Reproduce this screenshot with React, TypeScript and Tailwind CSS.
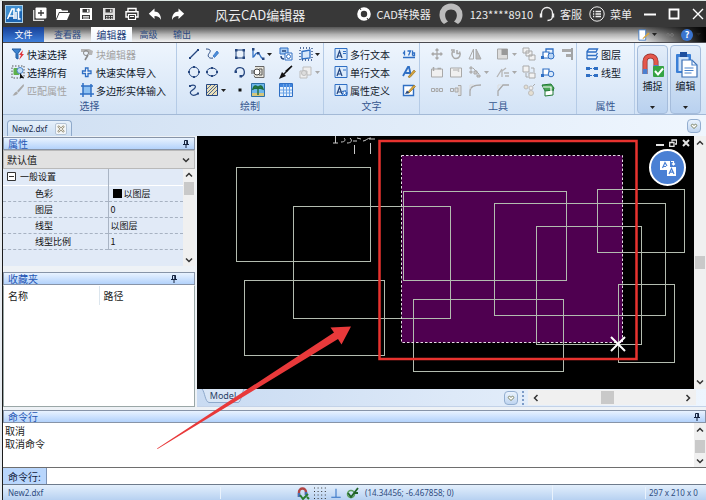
import type { ReactNode } from "react";

const NAVY = "#25467f";
const BLUE = "#2f6fc4";
const GRAY = "#a9a9a9";

function Ico({ children, className = "size-3.5" }: { children: ReactNode; className?: string }) {
  return (
    <svg viewBox="0 0 14 14" fill="none" className={`${className} shrink-0`} aria-hidden="true">
      {children}
    </svg>
  );
}

function Caret({ color = "#222" }: { color?: string }) {
  return (
    <svg viewBox="0 0 5 3" className="h-[3px] w-[5px] shrink-0" aria-hidden="true">
      <path d="M0 0h5L2.500 3z" fill={color} />
    </svg>
  );
}

function Chevron({ dir }: { dir: "up" | "down" | "left" | "right" }) {
  const d = {
    up: "M1 5.500 4 2.500l3 3",
    down: "M1 2.500 4 5.500l3-3",
    left: "M5.500 1 2.500 4l3 3",
    right: "M2.500 1 5.500 4l-3 3",
  }[dir];
  return (
    <svg viewBox="0 0 8 8" className="size-2 shrink-0" fill="none" stroke="#333" strokeWidth="1.500" aria-hidden="true">
      <path d={d} />
    </svg>
  );
}

function Pin() {
  return (
    <svg viewBox="0 0 8 8" className="size-2 shrink-0" fill="none" stroke="#14233f" aria-hidden="true">
      <path d="M2.500 4.500v-4h3v4M1 4.500h6M4 5v3" />
      <path d="M5 .5v4" strokeWidth="1.500" />
    </svg>
  );
}

function HeartButton({ label }: { label: string }) {
  return (
    <button aria-label={label} className="flex size-[14px] shrink-0 items-center justify-center rounded-sm border border-[#93aed0] bg-linear-to-b from-[#eaf3fd] to-[#bfd5f0]">
      <svg viewBox="0 0 8 8" className="size-2" fill="#fff" stroke="#7d8468" aria-hidden="true">
        <path d="M4 6.500 1 3.600 2.300 2 4 3.300 5.700 2 7 3.600z" />
      </svg>
    </button>
  );
}

/* ---------- title bar ---------- */

function TitleIcon({ label, children }: { label: string; children: ReactNode }) {
  return (
    <button aria-label={label} className="flex h-4 w-[23px] items-center justify-center">
      <svg viewBox="0 0 14 14" className="size-3.5" fill="none" aria-hidden="true">{children}</svg>
    </button>
  );
}

function TitleBar() {
  return (
    <header className="flex h-[26px] shrink-0 items-center bg-[#383838] pr-0.5 pl-0.5 text-[11px] text-[#ececec]">
      <svg viewBox="0 0 18 18" className="size-[18px] shrink-0" aria-hidden="true">
        <rect width="18" height="18" fill="#a9cfe8" />
        <rect x="1" y="1" width="16" height="16" fill="#1c66b4" />
        <path d="M1 1h16v5L1 12z" fill="#3f8ed0" />
        <path d="M2.500 14 7 4h2v10M4.500 11H9M11 14V7M13.500 3v8M11.500 5h4M13.500 11v3h2" stroke="#fff" strokeWidth="1.600" fill="none" />
      </svg>
      <nav aria-label="快速访问" className="ml-[5px] flex items-center">
        <TitleIcon label="新建">
          <path d="M.7 3v10.300H11" stroke="#ddd" strokeWidth="1.300" />
          <rect x="2.500" y=".5" width="11" height="11" rx="1" fill="#fff" />
          <path d="M8 3v6M5 6h6" stroke="#383838" strokeWidth="1.300" />
        </TitleIcon>
        <TitleIcon label="打开">
          <path d="M0 12V2h5l1 1.500h6V5H3zM3.500 6H14l-3 7H.5z" fill="#fff" />
        </TitleIcon>
        <TitleIcon label="保存">
          <path d="M1 1h12v12H1z" fill="#fff" />
          <path d="M3.500 2h7v3.500h-7zM3 8h8v4H3z" fill="#383838" />
          <path d="M8 2.500h1.500V5H8zM4 9h6v.8H4zM4 10.600h6v.8H4z" fill="#fff" />
        </TitleIcon>
        <TitleIcon label="另存为">
          <path d="M1 1h12v12H1z" fill="#ddd" />
          <path d="M3.500 2h7v3.500h-7zM3 8h8v4H3z" fill="#383838" />
          <path d="M8 2.500h1.500V5H8zM4 9h1.500v1H4zM6.500 9H8v1H6.500zM9 9h1.500v1H9zM4 10.800h1.500v1H4zM6.500 10.800H8v1H6.500zM9 10.800h1.500v1H9z" fill="#ddd" />
        </TitleIcon>
        <TitleIcon label="打印">
          <path d="M3 4V1.500h8V4M3 10H1V4.700h12V10h-2" stroke="#fff" strokeWidth="1.400" />
          <path d="M3.500 7.500h7v5h-7zM5 9.500h4" stroke="#fff" strokeWidth="1.200" />
        </TitleIcon>
        <TitleIcon label="撤销">
          <path d="M6.500 1.500v3c4 0 6.500 3 6.500 8.500-1.500-3-3-4-6.500-4v3L.8 6.700z" fill="#fff" />
        </TitleIcon>
        <TitleIcon label="重做">
          <path d="M7.500 1.500v3C3.500 4.500 1 7.500 1 13c1.500-3 3-4 6.500-4v3l5.700-5.300z" fill="#fff" />
        </TitleIcon>
      </nav>
      <h1 className="ml-[26px] text-[13px] leading-none whitespace-nowrap">风云CAD编辑器</h1>
      <div className="ml-auto flex items-center whitespace-nowrap">
        <button className="flex items-center gap-[5px]">
          <svg viewBox="0 0 14 14" className="size-3.5" fill="none" aria-hidden="true">
            <circle cx="7" cy="7" r="5" stroke="#fff" strokeWidth="3.600" />
            <path d="m2 0 2 3M12 14l-2-3" stroke="#383838" />
          </svg>
          CAD转换器
        </button>
        <button className="ml-2 flex items-center gap-[7px]">
          <svg viewBox="0 0 24 24" className="size-6" aria-hidden="true">
            <path d="M5 22A11.500 11.500 0 1 1 19 22l-4-2.500c4-3 4.500-12-3-12s-7 9-3 12z" fill="#bcbcbc" />
          </svg>
          123****8910
        </button>
        <button className="ml-1.5 flex items-center gap-[5px]">
          <svg viewBox="0 0 16 16" className="size-4" fill="none" stroke="#eee" aria-hidden="true">
            <path d="M2.500 8V7a5.500 5.500 0 0 1 11 0v1M13.500 10c0 3-2 4.500-5 4.500" strokeWidth="1.300" />
            <path d="M2 7.500v4M14 7.500v4" strokeWidth="2.400" />
          </svg>
          客服
        </button>
        <button className="ml-[7px] flex items-center gap-[5px]">
          <svg viewBox="0 0 16 16" className="size-4" fill="none" stroke="#eee" aria-hidden="true">
            <circle cx="8" cy="8" r="7.200" />
            <path d="M4 5.500h1.200M6.500 5.500H12M4 8h1.200M6.500 8H12M4 10.500h1.200M6.500 10.500H12" strokeWidth="1.300" />
          </svg>
          菜单
        </button>
        <div className="ml-3 flex items-center gap-3">
          <button aria-label="最小化"><svg viewBox="0 0 12 12" className="size-3" stroke="#fff" strokeWidth="2"><path d="M0 6.500h12" /></svg></button>
          <button aria-label="最大化"><svg viewBox="0 0 12 12" className="size-3" stroke="#fff" strokeWidth="1.800" fill="none"><path d="M1.500 1.500h9v9h-9z" /></svg></button>
          <button aria-label="关闭"><svg viewBox="0 0 12 12" className="size-3" stroke="#fff" strokeWidth="1.400"><path d="m1 1 10 10M11 1 1 11" /></svg></button>
        </div>
      </div>
    </header>
  );
}

function RibbonTabs() {
  return (
    <div className="flex h-4 shrink-0 items-stretch border-b border-[#4a4a50] bg-linear-to-b from-[#565656] via-[#b4b4b4] to-[#f4f4f4] text-[9px] text-[#2c4a82]">
      <div role="tablist" className="flex items-stretch leading-none">
        <button role="tab" className="w-[41px] bg-linear-to-b from-[#173f96] to-[#3d7edb] text-white">文件</button>
        <button role="tab" className="w-[47px]">查看器</button>
        <button role="tab" aria-selected="true" className="w-[41px] bg-linear-to-b from-white to-[#eef5fd] text-[10px] text-[#1f3f7a]">编辑器</button>
        <button role="tab" className="w-[33px]">高级</button>
        <button role="tab" className="w-[34px]">输出</button>
      </div>
      <div className="ml-auto flex w-[110px] items-center justify-end gap-[3px] bg-linear-to-r from-transparent from-40% to-black pr-[5px]">
        <button aria-label="样式" className="flex items-center gap-0.5">
          <Ico className="size-3">
            <path d="M1 1h8v12H1z" fill="#fff" stroke="#3b76c4" />
            <path d="m5 11 7-7 1.500 1.500-7 6z" fill="#d9a63c" />
          </Ico>
          <Caret />
        </button>
        <svg viewBox="0 0 8 6" className="mr-1 ml-1.5 h-1.5 w-2" fill="none" stroke="#777" aria-hidden="true"><circle cx="2" cy="3" r="1.400" /><circle cx="6" cy="3" r="1.400" /></svg>
        <button aria-label="帮助" className="flex size-3 items-center justify-center rounded-full bg-[#3a74cf] text-[9px] leading-none font-bold text-white">?</button>
        <Caret />
      </div>
    </div>
  );
}

/* ---------- ribbon ---------- */

function Group({ title, className, children }: { title: string; className: string; children: ReactNode }) {
  return (
    <section className={`flex shrink-0 flex-col border-r border-[#b5cbe6] ${className}`}>
      <div className="h-14 pt-0.5">{children}</div>
      <h2 className="text-center text-[10px] leading-[14px] text-[#35568f]">{title}</h2>
    </section>
  );
}

function Cmd({ icon, label, off }: { icon: ReactNode; label: string; off?: boolean }) {
  return (
    <button disabled={off} className={`flex h-[18px] items-center gap-0.5 text-[10px] whitespace-nowrap ${off ? "text-[#a3a3a3]" : "text-[#10182a]"}`}>
      {icon}
      {label}
    </button>
  );
}

function Tool({ label, caret, off, children }: { label: string; caret?: boolean; off?: boolean; children: ReactNode }) {
  return (
    <button aria-label={label} disabled={off} className="flex h-[18px] items-center gap-0.5 pl-0.5">
      <Ico>{children}</Ico>
      {caret && <Caret color={off ? GRAY : "#222"} />}
    </button>
  );
}

function SelectGroup() {
  return (
    <Group title="选择" className="w-[174px]">
      <div className="flex">
        <div className="flex w-[70px] flex-col pl-2">
          <Cmd label="快速选择" icon={<Ico><path d="M1 2h9L7 6.500V12l-2-1V6.500z" fill="#3c83cf" stroke="#235b9f" /><path d="m12 3-4 5h2l-2 5 5-6h-2z" fill="#e0353b" /></Ico>} />
          <Cmd label="选择所有" icon={<Ico><path d="M1 1h12v12H1z" stroke="#555" strokeDasharray="1.500 1.500" /><rect x="2.500" y="3" width="6" height="7" rx="1" fill="#5db04a" /><circle cx="9" cy="5.500" r="3" fill="#c2dcf5" stroke="#4a86c8" /><path d="m9 8 4 5H9z" fill="#111" /></Ico>} />
          <Cmd off label="匹配属性" icon={<Ico><path d="M12.500 1 6 8l1.500 1.500L13 3zM5.500 8.500 7 10c-1 2-3 2.500-5.500 2.500C3 11.500 3.500 9 5.500 8.500z" fill={GRAY} /></Ico>} />
        </div>
        <div className="flex flex-col pl-[7px]">
          <Cmd off label="块编辑器" icon={<Ico><path d="M1 2h8l4 2-1 4H9L8 5H1z" fill="#b5b5b5" /><circle cx="6" cy="6" r="2.500" stroke="#888" /><path d="m8 8-3 5" stroke="#888" strokeWidth="1.600" /></Ico>} />
          <Cmd label="快速实体导入" icon={<Ico><path d="M5.500 3h2.500v3h3v2.500H8v3H5.500v-3h-3V6h3z" stroke={BLUE} strokeWidth="1.300" fill="#fff" /></Ico>} />
          <Cmd label="多边形实体输入" icon={<Ico><path d="M3 3h8v8H3z" fill="#8cc0f2" /><path d="M3 0v14M11 1v13M0 11h14M1 3h12" stroke={BLUE} strokeWidth="1.500" /></Ico>} />
        </div>
      </div>
    </Group>
  );
}

function DrawGroup() {
  return (
    <Group title="绘制" className="w-[147px]">
      <div className="grid grid-cols-[18px_28px_18px_28px_20px_26px] pl-2">
        <Tool label="直线"><path d="M3 11 11 3" stroke={NAVY} strokeWidth="1.200" /><path d="M2 10h2v2H2zM10 2h2v2h-2z" fill={NAVY} /></Tool>
        <Tool label="徒手画"><path d="M1 2c5 0 5 2 3 4.500s0 5.500 4 4.500" stroke={NAVY} /><path d="m8 9 4-5 1.500 2-4 4.500z" fill="#4d8fda" stroke={BLUE} strokeWidth=".8" /></Tool>
        <Tool label="矩形"><path d="M3 3h8v8H3z" stroke={NAVY} /><path d="M2 2h2.500v2.500H2zM9.500 2H12v2.500H9.500zM2 9.500h2.500V12H2zM9.500 9.500H12V12H9.500z" fill={NAVY} /></Tool>
        <Tool label="多段线" caret><path d="M2 2v8c2 0 2-5 5-4s2 6 6 6" stroke={BLUE} strokeWidth="1.300" /><path d="M1 1h2.500v2.500H1zM6 5h2.500v2.500H6zM11 10.500h2.500V13H11z" fill={NAVY} /></Tool>
        <Tool label="插入块"><path d="M1 1h8v6H1z" fill="#a9cdf3" stroke={BLUE} /><path d="M6 6h7v7H6z" fill="#fff" stroke={BLUE} /><circle cx="9.500" cy="9.500" r="2" stroke={BLUE} /><path d="M2 9c0 2 1 3 3 3M3 4h4" stroke={NAVY} strokeWidth="1.400" /></Tool>
        <Tool label="面域" caret><path d="M3 4.500 11 3v8l-8 1z" fill="#d8e8fa" stroke={BLUE} strokeWidth="1.300" /><path d="M1 1h12v12H1z" stroke={NAVY} strokeDasharray="1 2" strokeWidth="1.300" /></Tool>

        <Tool label="圆"><circle cx="7" cy="7" r="5" stroke={NAVY} /><path d="M6 1h2v2H6zM6 11h2v2H6zM1 6h2v2H1zM11 6h2v2h-2z" fill={NAVY} /></Tool>
        <Tool label="椭圆"><ellipse cx="7" cy="7" rx="5.200" ry="4" stroke={NAVY} /><path d="M6 2h2v2H6zM6 10h2v2H6zM1 6h2v2H1zM11 6h2v2h-2z" fill={NAVY} /></Tool>
        <Tool label="圆弧"><path d="M2.500 6A4.500 4.500 0 1 1 8 11.500" stroke={NAVY} strokeWidth="1.300" /><path d="M1.500 5.500H4V8H1.500zM6.500 10H9v2.500H6.500z" fill={NAVY} /></Tool>
        <Tool label="擦除"><path d="M4 1.500h9v11H4l-1-2" fill="#e7e5dc" stroke="#666" /><circle cx="6" cy="7" r="3" fill="#fff" stroke="#444" /><path d="M0 6h4M0 8h4M8 4h3v6H8" stroke="#555" /></Tool>
        <Tool label="引线"><path d="M13 1 4 10" stroke="#111" strokeWidth="1.500" /><path d="M0 14 3 7l4 4z" fill="#111" /><path d="M13 0 6 6l2 1z" fill="#111" /></Tool>
        <Tool label="三维实体" caret off><path d="M1 6h7v7H1zM4 6V2h8v8H8" fill="#eee" stroke="#bdbdbd" /><circle cx="5" cy="8" r="2.500" fill="#ddd" stroke="#bdbdbd" /></Tool>

        <Tool label="样条曲线"><path d="M3 3c4-2 7 0 4.500 2.500S2 8.500 4 11s5 1 7-.5" stroke={NAVY} strokeWidth="1.200" /><path d="M2 2h2v2H2zM10 9.500h2v2h-2z" fill={NAVY} /></Tool>
        <Tool label="填充" caret><path d="M1.500 1.500h11v11h-11z" fill="#eadfb8" stroke={NAVY} /><path d="m2 6 4-4M2 10l8-8M3 12l9-9M7 12l5-5" stroke="#4f6a95" /></Tool>
        <Tool label="点"><path d="M5.500 5.500h3v3h-3z" fill="#111" /></Tool>
        <Tool label="图像"><path d="M.5.5h13v13H.500z" fill="#6db6ea" stroke="#2b6fa8" /><path d="M1 10h12v3H1z" fill="#d5c67c" /><path d="M7 12V5M2 6c1-4 4-4 5-1 1-3 4-3 5 1-2-1-3-1-5-1-2 0-3 0-5 1z" stroke="#1d6b3b" strokeWidth="1.400" fill="#2a8a4b" /></Tool>
        <Tool label="表格"><path d="M.5.500h13v13H.500z" fill="#e6f1fd" stroke={BLUE} /><path d="M1 1h12v3H1z" fill="#3f84dd" /><path d="M1 7h12M1 10h12M4.500 1v12M7.500 1v12M10.500 1v12" stroke="#6aa3e6" /></Tool>
      </div>
    </Group>
  );
}

function TextIco({ kind }: { kind: "multi" | "single" | "attr" }) {
  return (
    <Ico>
      <path d="M1 1.500h12v11H1z" fill="#dcebfb" stroke={BLUE} />
      <path d="m3 11 2.500-7L8 11M3.500 9h4" stroke={NAVY} strokeWidth="1.200" />
      {kind === "multi" && <path d="M9 4.500h3M9 6.500h3" stroke={BLUE} />}
      {kind === "single" && <path d="M9 5h3" stroke={BLUE} />}
      {kind === "attr" && <circle cx="10.500" cy="10" r="2" stroke={BLUE} strokeWidth="2" strokeDasharray="1.500 .6" fill="#fff" />}
    </Ico>
  );
}

function TextGroup() {
  return (
    <Group title="文字" className="w-24">
      <div className="flex justify-between pr-[3px] pl-2.5">
        <div className="flex flex-col">
          <Cmd label="多行文本" icon={<TextIco kind="multi" />} />
          <Cmd label="单行文本" icon={<TextIco kind="single" />} />
          <Cmd label="属性定义" icon={<TextIco kind="attr" />} />
        </div>
        <div className="flex flex-col">
          <Tool label="查找文本"><path d="M1 10.500h12M2.500 3.500v5M2.500 5 1 6.500M5.500 4h3L6.500 8.500M10.500 3.500v5M10.500 6h2v2.500h-2" stroke={BLUE} strokeWidth="1.300" /></Tool>
          <Tool label="文字样式"><path d="M1 11 6 2h1l2 9M3.500 8H8" stroke={BLUE} strokeWidth="1.800" /><path d="m6 12 6-7 1.500 1.500L8 12.500z" fill="#d8a53a" stroke="#8f6a1e" strokeWidth=".6" /></Tool>
          <Tool label="编辑文字"><path d="M1.500 2.500h10v10h-10z" fill="#fff" stroke={BLUE} strokeWidth="1.400" /><path d="m5 10 7-8 1.500 1.500L7 10z" fill="#d8a53a" stroke="#8f6a1e" strokeWidth=".6" /><path d="M3 11 5 7.500 7.500 10z" fill={NAVY} /></Tool>
        </div>
      </div>
    </Group>
  );
}

function ToolsGroup() {
  return (
    <Group title="工具" className="w-[157px]">
      <div className="grid grid-cols-[19px_19px_28px_26px_19px_19px_19px] pl-2">
        <Tool off label="移动"><path d="M7 2v10M2 7h10M5.500 3.500 7 2l1.500 1.500M5.500 10.500 7 12l1.500-1.500M3.500 5.500 2 7l1.500 1.500M10.500 5.500 12 7l-1.500 1.500" stroke={GRAY} strokeWidth="1.300" /></Tool>
        <Tool off label="旋转"><path d="M3.500 4C2 8 4 11.500 7 11.500S12.500 8 10.500 4.500M2 3h3v3M8 3v3.500h3.500" stroke={GRAY} strokeWidth="1.500" /></Tool>
        <Tool off label="镜像"><path d="M5.500 2v10H1z" stroke={GRAY} /><path d="M8 2v10h5z" fill="#bbb" stroke={GRAY} /></Tool>
        <Tool off label="缩放" caret><path d="M1.500 2h10v10h-10z" fill="#ddd" stroke={GRAY} /><path d="M5.500 2h6v6h-6z" fill="#999" /></Tool>
        <Tool off label="前置"><path d="M1 1h6v5H1zM4 4h6v5H4zM7 8h6v5H7z" fill="#f2f2f2" stroke={GRAY} /></Tool>
        <Tool label="创建组"><path d="M2 5h6v6H2z" fill="#fff" stroke={BLUE} strokeWidth="1.200" /><path d="M5 5V2h7v5" stroke={BLUE} strokeWidth="1.300" /><circle cx="10" cy="9" r="3" fill="#b9d5f5" stroke={BLUE} /><path d="M0 9h3v3H0z" fill={BLUE} /></Tool>
        <Tool off label="对齐"><path d="M12 1v12" stroke="#888" strokeWidth="1.500" /><path d="M2 2h9v3H2zM6 7h5v3H6z" fill={GRAY} /></Tool>

        <Tool off label="复制"><path d="M1.500 4h11v8h-11z" fill="#f0f0f0" stroke={GRAY} /><path d="M3.500 2v4M7.500 3.500H11" stroke={GRAY} strokeWidth="1.500" /></Tool>
        <Tool off label="偏移"><path d="M1.500 3h11v9h-11z" fill="#f0f0f0" stroke={GRAY} /><path d="M4 5h5M9.500 3v4" stroke="#c4c4c4" strokeWidth="1.500" /></Tool>
        <Tool off label="阵列" caret><path d="M2 2h2v2H2zM2 6h2v2H2zM6 6h3v3H6zM9 10h3v2H9z" fill="#c9c9c9" stroke={GRAY} /><path d="m5 3 6 6" stroke={GRAY} /></Tool>
        <Tool off label="修剪" caret><path d="m1 12 5-8M6 12V6l4-3M8 8h5M9 11h4" stroke="#b5b5b5" strokeWidth="1.300" /></Tool>
        <Tool off label="后置"><path d="M1 1h6v6H1zM7 8h6v5H7z" fill="#f2f2f2" stroke={GRAY} /><path d="M4 8v4h2M9 3h3v4" stroke={GRAY} /></Tool>
        <Tool label="取消组"><path d="M2 4h6v6H2z" fill="#fff" stroke={BLUE} strokeWidth="1.200" /><circle cx="10" cy="9" r="2.800" fill="#d9e9fb" stroke={BLUE} /><path d="M0 9h3v3H0z" fill={BLUE} /></Tool>
        <span />

        <Tool off label="打断"><path d="M1.500 5.500h3v3h-3zM9.500 5.500h3v3h-3zM6 5.500h2v3H6z" stroke={GRAY} /></Tool>
        <Tool off label="延伸"><path d="M1.500 5.500h3v3h-3z" stroke={GRAY} /><path d="M6 5h3v4H6zM9 2.500h3v10H9" fill="#ddd" stroke={GRAY} /></Tool>
        <Tool off label="圆角"><path d="M2 13V8c0-4 3-6 11-6" stroke={GRAY} strokeWidth="1.300" /><path d="M2 6V2h4" stroke="#ddd" /></Tool>
        <Tool off label="倒角"><path d="M2 13V8l5-6h6" stroke={GRAY} strokeWidth="1.300" /><path d="M2 6V2h4" stroke="#ddd" /></Tool>
        <Tool off label="分解"><circle cx="4" cy="4" r="2" fill="#e5dfd2" stroke="#bdbdbd" /><circle cx="9" cy="5" r="2" fill="#eee" stroke="#bdbdbd" /><circle cx="9" cy="10" r="2.500" fill="#e5dfd2" stroke="#bdbdbd" /><path d="m11 3 2-2" stroke={GRAY} /></Tool>
        <Tool label="合并"><path d="m1 2 9-1 3 4-1 3H4z" fill="#4aa556" stroke="#237a36" /><path d="m4 8 8-1v5l-8 1z" fill="#fff" stroke="#237a36" /><path d="M2 4h8v4" stroke="#fff" strokeWidth="1.200" /></Tool>
      </div>
    </Group>
  );
}

function PropsGroup() {
  return (
    <Group title="属性" className="w-[58px]">
      <div className="flex flex-col pl-2">
        <Cmd label="图层" icon={<Ico><path d="M2 4.500 4 2h8.500L11 5H2zM2 8.500h9L12.500 6M2 12h9l1.500-3M2 4.500V12" stroke={BLUE} strokeWidth="1.300" fill="#eaf3fd" /></Ico>} />
        <Cmd label="线型" icon={<Ico><path d="M2 3.500h10M2 10.500h10" stroke={BLUE} strokeWidth="1.200" strokeDasharray="2 1" /><path d="M1 2h4v3H1zM9 2h4v3H9zM1 9h4v3H1zM9 9h4v3H9z" fill={BLUE} /></Ico>} />
      </div>
    </Group>
  );
}

function BigButton({ label, children }: { label: string; children: ReactNode }) {
  return (
    <button className="flex h-[69px] w-[31px] shrink-0 flex-col items-center rounded-sm border border-[#a5bcdb] bg-linear-to-b from-[#e3edf9] via-[#cddff3] to-[#b9d1ef] pt-1.5 text-[10px] text-[#10182a]">
      <svg viewBox="0 0 24 26" className="h-[26px] w-6" fill="none" aria-hidden="true">{children}</svg>
      <span className="mt-px leading-[14px]">{label}</span>
      <span className="mt-[13px]"><Caret /></span>
    </button>
  );
}

function Ribbon() {
  return (
    <div className="flex h-[72px] shrink-0 overflow-hidden border-b border-[#a3b9d6] bg-linear-to-b from-[#eef5fd] to-[#d3e3f6]">
      <SelectGroup />
      <DrawGroup />
      <TextGroup />
      <ToolsGroup />
      <PropsGroup />
      <div className="flex gap-0.5 pt-0.5 pl-0.5">
        <BigButton label="捕捉">
          <path d="M4 22V9.500a5.500 5.500 0 0 1 11 0V20" stroke="#8e2c27" strokeWidth="5" />
          <path d="M4 21V9.500a5.500 5.500 0 0 1 11 0V19" stroke="#e4574c" strokeWidth="3.600" />
          <path d="M4 17v5M15 13v6" stroke="#4a7fd0" strokeWidth="4.500" />
          <rect x="12" y="14" width="11" height="11" rx="1" fill="#35a343" />
          <path d="m14 19 3 3.500 5-6" stroke="#fff" strokeWidth="2" />
        </BigButton>
        <BigButton label="编辑">
          <rect x="2" y="2" width="15" height="19" rx="1" fill="#3a7fd6" />
          <path d="M4.500 5h10v14h-10z" fill="#cfe2f8" />
          <path d="M6 0h7v5H6z" fill="#1d4f9e" />
          <path d="M8 8h10l5 5v12H8z" fill="#fff" stroke="#3a6fb5" strokeWidth="1.200" />
          <path d="M18 8v5h5M10.500 16h9M10.500 18.500h9M10.500 21h7" stroke="#4a83cc" strokeWidth="1.200" />
        </BigButton>
      </div>
    </div>
  );
}

function DocTabs() {
  return (
    <div className="flex h-[21px] shrink-0 items-center justify-between bg-linear-to-r from-[#cfdff2] to-[#eff6fe] pr-[5px] pl-1">
      <div className="flex h-4 items-center gap-2 self-end rounded-t-sm border border-b-0 border-[#8fa9ca] bg-linear-to-b from-[#e6f0fb] to-[#cddff3] pr-1 pl-1 font-['Noto_Sans',sans-serif] text-[8px] text-[#1a2c4c]">
        New2.dxf
        <button aria-label="关闭文档" className="flex size-3 items-center justify-center rounded-xs border border-[#b5c4d6] bg-[#f3f6f8]">
          <svg viewBox="0 0 8 8" className="size-2" stroke="#9a937c" strokeWidth="2.200"><path d="m1 1 6 6M7 1 1 7" /><path d="m1.500 1.500 5 5M6.500 1.500l-5 5" stroke="#fff" strokeWidth=".8" /></svg>
        </button>
      </div>
      <HeartButton label="文档列表" />
    </div>
  );
}

/* ---------- side panels ---------- */

function PanelHeader({ title, pinClass = "pr-1" }: { title: string; pinClass?: string }) {
  return (
    <div className={`flex h-[13px] shrink-0 items-center justify-between border border-[#8794a8] bg-linear-to-b from-[#e9f3ff] to-[#b3d2fb] pl-1 ${pinClass}`}>
      <h2 className="text-[10px] leading-none text-[#2456b4]">{title}</h2>
      <button aria-label={`固定${title}`}><Pin /></button>
    </div>
  );
}

const PROPERTIES = [
  { name: "色彩", value: "以图层", swatch: true },
  { name: "图层", value: "0" },
  { name: "线型", value: "以图层" },
  { name: "线型比例", value: "1" },
];

function SidePanels() {
  return (
    <aside className="flex w-[192px] shrink-0 flex-col bg-[#eef2f6] pt-px">
      <PanelHeader title="属性" />
      <label className="relative block h-[19px] shrink-0">
        <span className="sr-only">对象</span>
        <select className="block h-full w-full appearance-none border border-[#b9b9b9] bg-[#e1e1e1] pl-[3px] text-[10px] leading-[17px] text-[#222]">
          <option>默认值</option>
        </select>
        <span className="pointer-events-none absolute top-1.5 right-[5px]"><Chevron dir="down" /></span>
      </label>
      <div className="flex h-[97px] shrink-0 bg-[#e1eaf7]">
        <table className="h-fit flex-1 table-fixed border-collapse text-[9px] leading-none text-[#111]">
          <tbody>
            <tr className="h-4 border-b border-white">
              <th scope="rowgroup" className="w-[105px] border-r border-[#a9b4c4] p-0 pl-1 text-left font-normal">
                <span className="flex items-center gap-1">
                  <svg viewBox="0 0 9 9" className="size-[9px]" fill="#fff" stroke="#333"><path d="M.5.5h8v8h-8z" /><path d="M2 4.500h5" /></svg>
                  一般设置
                </span>
              </th>
              <td className="p-0" />
            </tr>
            {PROPERTIES.map((p) => (
              <tr key={p.name} className="h-4 border-b border-dashed border-[#a7b2c2]">
                <th scope="row" className="border-r border-solid border-[#a9b4c4] p-0 pl-8 text-left font-normal">{p.name}</th>
                <td className="p-0 pl-0.5">
                  <span className="flex items-center gap-0.5">
                    {p.swatch && <span className="ml-0.5 size-[9px] bg-black" />}
                    {p.value}
                  </span>
                </td>
              </tr>
            ))}
          </tbody>
        </table>
        <div className="flex w-3 flex-col items-center bg-[#f0f0f0] py-0.5">
          <Chevron dir="up" />
          <span className="mt-[3px] h-[13px] w-2.5 bg-[#c9c9c9]" />
          <span className="mt-auto"><Chevron dir="down" /></span>
        </div>
      </div>
      <div className="h-1.5 shrink-0" />
      <PanelHeader title="收藏夹" pinClass="pr-4" />
      <div className="flex-1 border border-[#9aa7a7] border-t-transparent bg-white">
        <table className="w-full table-fixed text-left text-[10px] leading-none text-[#222]">
          <thead>
            <tr className="h-[19px]">
              <th className="w-[95px] border-r border-[#dce6ee] p-0 pl-1 font-normal">名称</th>
              <th className="p-0 pl-1 font-normal">路径</th>
            </tr>
          </thead>
        </table>
      </div>
    </aside>
  );
}

/* ---------- drawing ---------- */

const SHAPES = [
  [236, 167, 134, 94],
  [293, 206, 157, 112],
  [244, 280, 140, 75],
  [403, 191, 163, 89],
  [413, 299, 150, 72],
  [494, 203, 171, 112],
  [536, 226, 105, 118],
  [597, 189, 87, 63],
  [618, 284, 56, 78],
];

function Drawing() {
  return (
    <div className="relative min-w-0 flex-1 overflow-hidden bg-black">
      <svg viewBox="197 136 497 253" width="497" height="253" fill="none" className="block max-w-none" role="img" aria-label="图纸">
        <rect x="401.500" y="155.500" width="221" height="187" fill="#4f0050" />
        {SHAPES.map(([x, y, w, h]) => (
          <rect key={`${x}-${y}`} x={x + 0.5} y={y + 0.5} width={w} height={h} stroke="#b3bcb0" />
        ))}
        <rect x="401.500" y="155.500" width="221" height="187" stroke="#e6dbe6" strokeDasharray="2.500 2" />
        <path d="M335.500 136v7M333 143h5M341 142c4 0 5-2 3-4M347 143c4 0 6-2 3-5M353 141h4M357 138l4 1M363 141c3 0 4-3 8-3M369 139h6M354.500 145v9M370.500 143v11" stroke="#c9c9c9" />
        <rect x="379.500" y="141" width="257" height="218" stroke="#e8332f" strokeWidth="2.500" />
        <path d="m611 337 14 14M625 337l-14 14" stroke="#fff" strokeWidth="2" />
      </svg>
      <div className="absolute top-[3px] right-1 flex gap-[5px]">
        <button aria-label="最小化图纸"><svg viewBox="0 0 8 8" className="block size-2" stroke="#e4e4e4" strokeWidth="2"><path d="M0 6h8" /></svg></button>
        <button aria-label="还原图纸"><svg viewBox="0 0 8 8" className="block size-2" stroke="#e4e4e4" strokeWidth="1.300" fill="none"><path d="M3 2.500V1h4.500v4H6M.7 3.500H5v4H.7z" /></svg></button>
        <button aria-label="关闭图纸"><svg viewBox="0 0 8 8" className="block size-2" stroke="#e4e4e4" strokeWidth="2"><path d="m1 1 6 6M7 1 1 7" /></svg></button>
      </div>
      <button aria-label="翻译" className="absolute top-[13px] right-2 flex size-[37px] items-center justify-center rounded-full border-2 border-white bg-[#4a80d4]">
        <svg viewBox="0 0 18 18" className="size-[18px]" fill="none" aria-hidden="true">
          <path d="M1 2h10v9H1zM8 8h9v9H8z" fill="#fff" />
          <path d="m3.500 9 2.500-5.500L8 7M4.500 7.500H7M10 15l2.500-5.500L15 15M11 13.200h3" stroke="#4a80d4" strokeWidth="1.200" />
          <path d="M12 2.500h2.500V6M13 4.500 14.500 6 16 4.500" stroke="#fff" strokeWidth="1.200" />
        </svg>
      </button>
    </div>
  );
}

function Workspace() {
  return (
    <div className="flex min-w-0 flex-1 flex-col">
      <div className="flex min-h-0 flex-1">
        <Drawing />
        <div className="flex w-3 shrink-0 flex-col items-center justify-between bg-[#f0f0f0] py-[3px]">
          <Chevron dir="up" />
          <span className="h-[13px] w-2.5 bg-[#c9c9c9]" />
          <Chevron dir="down" />
        </div>
      </div>
      <div className="flex h-[18px] shrink-0 items-center border-b border-[#c3d2e8] bg-linear-to-r from-[#c9dbf2] via-[#dde9f8] to-[#edf5fe] font-['Noto_Sans',sans-serif] text-[#2a3f66]">
        <button className="relative ml-1 flex h-[14px] w-11 items-center justify-center self-start text-[9px]">
          <svg viewBox="0 0 44 14" className="absolute inset-0 h-full w-full" fill="#d9e6f6" stroke="#8ea9cb" aria-hidden="true"><path d="M1 0c3 3 3 13 7 13.500h29c3 0 4-10 6-13.500" /></svg>
          <span className="relative">Model</span>
        </button>
        <div className="ml-auto flex h-full items-center">
          <HeartButton label="布局列表" />
          <span className="mx-1 h-3.5 border-l-2 border-dotted border-[#7d9cc8]" />
          <div className="flex h-[15px] w-[168px] items-center bg-[#f0f0f0] px-1">
            <Chevron dir="left" />
            <span className="ml-[61px] h-[13px] w-[13px] bg-[#c9c9c9]" />
            <span className="ml-auto"><Chevron dir="right" /></span>
          </div>
          <span className="w-2.5" />
        </div>
      </div>
    </div>
  );
}

/* ---------- command line and status ---------- */

function CommandPanel() {
  return (
    <section className="shrink-0 bg-[#eef2f6] pt-[3px]">
      <PanelHeader title="命令行" />
      <div className="flex h-[45px] justify-between border-b border-[#6e6e6e] bg-white">
        <div className="pt-px pl-0.5 text-[10px] leading-[13px] text-[#222]">
          <p>取消</p>
          <p>取消命令</p>
        </div>
        <div className="flex w-3 flex-col items-center bg-[#f0f0f0] pt-[3px] pb-0.5">
          <Chevron dir="up" />
          <span className="mt-1.5 h-[13px] w-2.5 bg-[#c9c9c9]" />
          <span className="mt-auto"><Chevron dir="down" /></span>
        </div>
      </div>
      <div className="flex h-[17px] border-b border-[#6e7b8c] text-[10px]">
        <label htmlFor="command" className="flex w-11 items-center justify-center border-r border-[#7d93b5] bg-[#b9d6fc] text-[#10203c]">命令行:</label>
        <input id="command" className="min-w-0 flex-1 bg-white px-1 outline-none" />
      </div>
    </section>
  );
}

function StatusBar() {
  return (
    <footer className="flex h-[15px] shrink-0 items-center bg-linear-to-b from-[#e3effc] to-[#b7d1f1] font-['Noto_Sans',sans-serif] text-[8px] whitespace-nowrap text-[#2f4c80]">
      <span className="w-[218px] border-r border-[#e9f2fc] pl-[5px]">New2.dxf</span>
      <div className="ml-[75px] flex items-center gap-[3px]">
        <button aria-label="捕捉"><Ico className="size-3.5"><path d="M3 11V6a3 3 0 0 1 7 0v3" stroke="#b04545" strokeWidth="2.400" /><path d="M3 7v4M10 6v3" stroke="#4470b8" strokeWidth="2.400" /><path d="m4 9 3 4 5-5M11 11l2 2" stroke="#2a7d2f" strokeWidth="2" /></Ico></button>
        <button aria-label="栅格"><Ico className="size-3.5"><path d="M1 2h12M1 5.500h12M1 9h12M1 12.500h12" stroke="#333" strokeDasharray="1 2.600" /></Ico></button>
        <button aria-label="正交"><Ico className="size-3"><path d="M7 2v10M1.500 12h11" stroke={BLUE} strokeWidth="1.200" /></Ico></button>
        <button aria-label="对象捕捉"><Ico className="size-3.5"><circle cx="6" cy="8" r="3.500" stroke="#5aa05a" strokeWidth="1.500" /><path d="m3 7 3 4 7-9M9 7h4" stroke="#23642a" strokeWidth="1.800" /></Ico></button>
      </div>
      <span className="ml-1.5">(14.34456; -6.467858; 0)</span>
      <span className="ml-auto flex h-full w-[93px] border-l border-[#e9f2fc]" />
      <span className="w-[61px] border-l border-[#e9f2fc] pl-[3px]">297 x 210 x 0</span>
    </footer>
  );
}

function Arrow() {
  return (
    <svg viewBox="0 0 200 126" className="pointer-events-none absolute top-[323px] left-[154px] h-[126px] w-[200px]" aria-hidden="true">
      <path d="M3 124.500 180 8.500 176.500 3.500 197 2.500 187.500 20.500 184 15 3.500 125z" fill="#e8393a" />
    </svg>
  );
}

export default function App() {
  return (
    <div className="relative flex h-screen flex-col overflow-hidden border-t border-t-[#dce6e2] bg-[#e8edf2] pl-0.5 font-['Noto_Sans_CJK_SC','Noto_Sans',sans-serif]">
      <div className="flex min-h-0 flex-1 flex-col border-l border-[#1c1c1c]">
        <TitleBar />
        <RibbonTabs />
        <Ribbon />
        <DocTabs />
        <main className="flex min-h-0 flex-1">
          <SidePanels />
          <div className="w-0.5 shrink-0 bg-[#eef2f6]" />
          <Workspace />
        </main>
        <CommandPanel />
        <StatusBar />
      </div>
      <Arrow />
    </div>
  );
}
